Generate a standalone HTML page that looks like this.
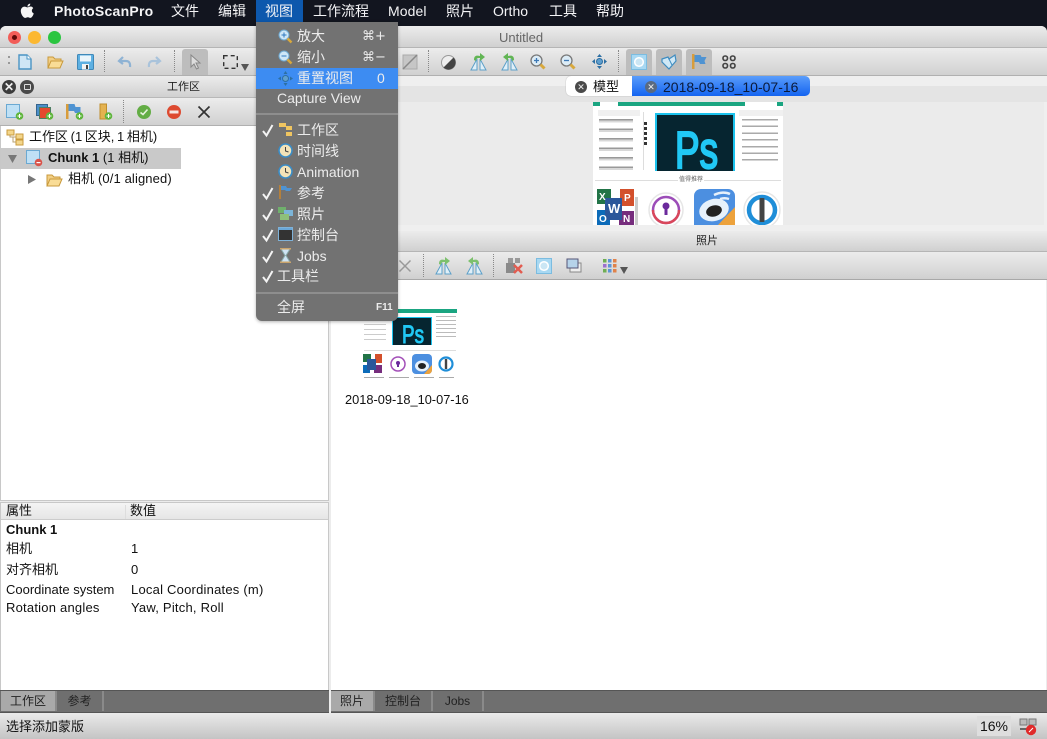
<!DOCTYPE html>
<html><head><meta charset="utf-8"><style>
*{box-sizing:border-box}
html,body{margin:0;padding:0;width:1047px;height:739px;overflow:hidden;background:#12151f}
body{font-family:"Liberation Sans","Noto Sans CJK SC",sans-serif;color:#111;position:relative;filter:blur(.35px)}
.a{position:absolute;white-space:nowrap}
.grad{background:linear-gradient(#ececec,#d0d0d0);}
.m{position:absolute;top:0;height:22px;line-height:23px;font-size:14px;color:#f4f4f6;white-space:nowrap}
.mi{position:absolute;left:22px;font-size:14px;color:#ececec;white-space:nowrap;line-height:20px}
.t{font-size:13px;line-height:18px;color:#111}
.tab{position:absolute;top:691px;height:20px;line-height:20px;font-size:12px;text-align:center;background:#6f6f6f;border-right:2px solid #8a8a8a;color:#222}
svg{position:absolute;overflow:visible}
</style></head><body>
<!-- menu bar -->
<svg style="left:20px;top:3px" width="15" height="16" viewBox="0 0 15 16"><path fill="#f5f5f5" d="M10.3 0.6c0 1.6-1.2 3-2.8 3C7.3 2.1 8.700.6 10.300.6zM13.200 5.300c-2 1.300-1.700 4.200.6 5.200-.6 1.700-1.800 4.300-3.300 4.400-1 0-1.400-.7-2.700-.7s-1.700.7-2.700.7C3.300 14.900.8 11 .8 8c0-3 2-4.400 3.700-4.400 1.200 0 2.200.8 3 .8.700 0 1.800-.9 3.200-.9 1 0 2 .5 2.500 1.800z"/></svg>
<div class="m" style="left:54px;font-weight:bold;letter-spacing:.25px">PhotoScanPro</div>
<div class="m" style="left:171px">文件</div>
<div class="m" style="left:218px">编辑</div>
<div class="a" style="left:256px;top:0;width:47px;height:22px;background:#0d58ad"></div>
<div class="m" style="left:265px">视图</div>
<div class="m" style="left:313px">工作流程</div>
<div class="m" style="left:388px;letter-spacing:.1px">Model</div>
<div class="m" style="left:446px">照片</div>
<div class="m" style="left:493px">Ortho</div>
<div class="m" style="left:549px">工具</div>
<div class="m" style="left:596px">帮助</div>

<!-- window -->
<div class="a" style="left:0;top:26px;width:1047px;height:713px;background:#ececec;border-radius:6px 6px 0 0;overflow:hidden">
 <div class="a grad" style="left:0;top:0;width:1047px;height:22px;border-bottom:1px solid #b5b5b5"></div>
 <div class="a grad" style="left:0;top:22px;width:1047px;height:28px;border-bottom:1px solid #b0b0b0"></div>
</div>
<div class="a" style="left:499px;top:30px;font-size:13px;line-height:16px;color:#666">Untitled</div>
<div class="a" style="left:8px;top:31px;width:13px;height:13px;border-radius:50%;background:#f25d58"></div>
<div class="a" style="left:12px;top:35px;width:5px;height:5px;border-radius:50%;background:#5e0b09"></div>
<div class="a" style="left:28px;top:31px;width:13px;height:13px;border-radius:50%;background:#fcb831"></div>
<div class="a" style="left:48px;top:31px;width:13px;height:13px;border-radius:50%;background:#2bc540"></div>

<!-- main toolbar icons -->
<div class="a" style="left:8px;top:56px;width:2px;height:2px;background:#999"></div>
<div class="a" style="left:8px;top:62px;width:2px;height:2px;background:#999"></div>
<svg style="left:18px;top:54px" width="14" height="16"><path d="M1 1h8l4 4v10H1z" fill="#cfe6f5" stroke="#4a94c4" stroke-width="1.400"/><path d="M9 1v4h4" fill="#fff" stroke="#4a94c4"/></svg>
<svg style="left:47px;top:55px" width="17" height="14"><path d="M1 13V2h5l2 2h6v2" fill="#f2cf85" stroke="#c99a3c"/><path d="M1 13l3-7h12l-3 7z" fill="#f9dc96" stroke="#c99a3c"/></svg>
<svg style="left:77px;top:54px" width="17" height="16"><rect x=".5" y=".5" width="16" height="15" rx="1" fill="#5db0e2" stroke="#3f88b8"/><rect x="3" y="1.500" width="11" height="6" fill="#eaf5fb"/><rect x="5" y="10" width="7" height="5.500" fill="#f4f4f4"/><rect x="9" y="11" width="2" height="4" fill="#444"/></svg>
<div class="a" style="left:104px;top:50px;height:22px;border-left:1px dotted #888"></div>
<svg style="left:118px;top:55px" width="14" height="14"><path d="M5 2L1 6l4 3M1.500 6H8c3 0 4.500 2 4 6" fill="none" stroke="#8fb3d4" stroke-width="2.200"/></svg>
<svg style="left:147px;top:55px" width="14" height="14"><path d="M9 2l4 4-4 3M12.500 6H6C3 6 1.500 8 2 12" fill="none" stroke="#a9c3db" stroke-width="2.200"/></svg>
<div class="a" style="left:174px;top:50px;height:22px;border-left:1px dotted #888"></div>
<div class="a" style="left:182px;top:49px;width:26px;height:26px;background:#bdbdbd;border-radius:3px 3px 0 0"></div>
<svg style="left:189px;top:54px" width="13" height="16"><path d="M2 1v12l3-3 2.500 5 2-1-2.500-5h4z" fill="#ddd" stroke="#888"/></svg>
<svg style="left:223px;top:55px" width="15" height="14"><rect x=".7" y=".7" width="13.600" height="12.600" fill="none" stroke="#333" stroke-width="1.400" stroke-dasharray="4 3"/></svg>
<svg style="left:241px;top:64px" width="9" height="7"><path d="M0 0h8L4 7z" fill="#555"/></svg>
<svg style="left:402px;top:54px" width="16" height="16"><rect x="1" y="1" width="14" height="14" fill="#c6c6c6" stroke="#aaa"/><path d="M1 15L15 1" stroke="#888" stroke-width="1.500"/></svg>
<div class="a" style="left:428px;top:50px;height:22px;border-left:1px dotted #888"></div>
<svg style="left:441px;top:55px" width="15" height="15"><circle cx="7.500" cy="7.500" r="7" fill="#eee" stroke="#999"/><path d="M12.500 2.500A7 7 0 0 1 2.500 12.500z" fill="#444"/></svg>
<svg style="left:470px;top:53px" width="18" height="18"><path d="M1 17L7 6v11zM10 6l6 11h-6z" fill="#e0eff8" stroke="#5da0c9"/><path d="M4 7c0-4 2-5 6-4V0l5 4-5 4V5C8 5 6 5 6 8z" fill="#62b554"/></svg>
<svg style="left:500px;top:53px" width="18" height="18"><path d="M17 17L11 6v11zM8 6L2 17h6z" fill="#e0eff8" stroke="#5da0c9"/><path d="M14 7c0-4-2-5-6-4V0L3 4l5 4V5c2 0 4 0 4 3z" fill="#62b554"/></svg>
<svg style="left:530px;top:54px" width="16" height="16"><circle cx="6.500" cy="6.500" r="5.500" fill="#dcecf6" stroke="#7a7a7a" stroke-width="1.300"/><path d="M10.500 10.500l4 4" stroke="#d8a83c" stroke-width="3"/><path d="M4 6.500h5M6.500 4v5" stroke="#3c78b5" stroke-width="1.300"/></svg>
<svg style="left:560px;top:54px" width="16" height="16"><circle cx="6.500" cy="6.500" r="5.500" fill="#dcecf6" stroke="#7a7a7a" stroke-width="1.300"/><path d="M10.500 10.500l4 4" stroke="#d8a83c" stroke-width="3"/><path d="M4 6.500h5" stroke="#3c78b5" stroke-width="1.300"/></svg>
<svg style="left:592px;top:54px" width="15" height="15"><circle cx="7.500" cy="7.500" r="3" fill="#5f9fce" stroke="#2d6fa3"/><path d="M7.500 0l-2.500 3h5zM7.500 15l-2.500-3h5zM0 7.500L3 5v5zM15 7.500L12 5v5z" fill="#2d6fa3"/></svg>
<div class="a" style="left:618px;top:50px;height:22px;border-left:1px dotted #888"></div>
<div class="a" style="left:626px;top:49px;width:26px;height:26px;background:#bdbdbd;border-radius:3px 3px 0 0"></div>
<div class="a" style="left:656px;top:49px;width:26px;height:26px;background:#bdbdbd;border-radius:3px 3px 0 0"></div>
<div class="a" style="left:686px;top:49px;width:26px;height:26px;background:#bdbdbd;border-radius:3px 3px 0 0"></div>
<svg style="left:631px;top:54px" width="16" height="16"><rect x=".5" y=".5" width="15" height="15" fill="#a8d8f2" stroke="#7bbce0"/><circle cx="8" cy="8" r="4.300" fill="#cbe6f4" stroke="#fff" stroke-width="1.500"/></svg>
<svg style="left:661px;top:54px" width="16" height="16"><path d="M1 5l6-2 1 2 6-4 1 6-7 8-7-7z" fill="#cfe8f6" stroke="#3f8cc0" stroke-width="1.200"/><path d="M8 5l3 6" stroke="#3f8cc0"/></svg>
<svg style="left:691px;top:53px" width="17" height="17"><rect x="1" y="1" width="2.500" height="15" fill="#d89d3c"/><path d="M3.500 2h6l1 2h5l-2 4 1 3H9l-1-2H3.500z" fill="#4f93d2"/></svg>
<svg style="left:722px;top:55px" width="14" height="14"><g fill="none" stroke="#444" stroke-width="1.600"><rect x="1" y="1" width="4.500" height="4.500" rx="2"/><rect x="8.500" y="1" width="4.500" height="4.500" rx="2"/><rect x="1" y="8.500" width="4.500" height="4.500" rx="2"/><rect x="8.500" y="8.500" width="4.500" height="4.500" rx="2"/></g></svg>

<!-- left dock -->
<div class="a grad" style="left:0;top:76px;width:329px;height:22px;border-bottom:1px solid #b8b8b8"></div>
<div class="a" style="left:167px;top:80px;font-size:11px;line-height:15px;color:#222">工作区</div>
<div class="a" style="left:2px;top:80px;width:14px;height:14px;border-radius:50%;background:#3c3c3c;color:#eee;font-size:12px;line-height:14px;text-align:center;font-weight:bold">✕</div>
<div class="a" style="left:20px;top:80px;width:14px;height:14px;border-radius:50%;background:#4a4a4a"></div>
<div class="a" style="left:24px;top:84px;width:7px;height:6px;border:1px solid #ddd;border-radius:1px"></div>
<div class="a grad" style="left:0;top:98px;width:329px;height:28px;border-bottom:1px solid #b0b0b0"></div>
<svg style="left:6px;top:104px" width="18" height="16"><rect x=".5" y=".5" width="13" height="13" fill="#bfe0f5" stroke="#6ba9d2"/><circle cx="13.500" cy="12" r="3.800" fill="#5fb53c"/><path d="M11.500 12h4M13.500 10v4" stroke="#fff"/></svg>
<svg style="left:36px;top:104px" width="18" height="16"><rect x=".5" y=".5" width="11" height="11" fill="#4a8fca" stroke="#36648c"/><rect x="3.500" y="3.500" width="11" height="11" fill="#e4492f" stroke="#4d7d63"/><circle cx="13.500" cy="12" r="3.800" fill="#5fb53c"/><path d="M11.500 12h4M13.500 10v4" stroke="#fff"/></svg>
<svg style="left:66px;top:103px" width="18" height="17"><rect x="0" y="1" width="2.500" height="15" fill="#d89d3c"/><path d="M2.500 1h6l1 3h5v6H9L8 8H2.500z" fill="#4f93d2"/><circle cx="13.500" cy="13" r="3.800" fill="#5fb53c"/><path d="M11.500 13h4M13.500 11v4" stroke="#fff"/></svg>
<svg style="left:100px;top:103px" width="13" height="17"><rect x="0" y="1" width="6.500" height="15" fill="#e4b250" stroke="#c08e2c"/><circle cx="8.500" cy="13" r="3.800" fill="#5fb53c"/><path d="M6.500 13h4M8.500 11v4" stroke="#fff"/></svg>
<div class="a" style="left:123px;top:100px;height:23px;border-left:1px dotted #888"></div>
<svg style="left:137px;top:105px" width="14" height="14"><circle cx="7" cy="7" r="7" fill="#63ad45"/><path d="M3.500 7.500l2.500 2 4.500-5" fill="none" stroke="#e6f3dd" stroke-width="1.600"/></svg>
<svg style="left:167px;top:105px" width="14" height="14"><circle cx="7" cy="7" r="7" fill="#dd4a30"/><rect x="2.500" y="5.500" width="9" height="3" fill="#f6e7e3"/></svg>
<svg style="left:197px;top:105px" width="14" height="14"><path d="M1.500 1.500l11 11M12.500 1.500l-11 11" stroke="#333" stroke-width="1.700"/></svg>

<!-- tree -->
<div class="a" style="left:0;top:126px;width:329px;height:375px;background:#fff;border:1px solid #c8c8c8;border-width:0 1px 1px 1px"></div>
<div class="a" style="left:1px;top:148px;width:180px;height:21px;background:#c9c9c9"></div>
<svg style="left:6px;top:129px" width="18" height="17"><path d="M4 5v3h7M7 8v5h4" fill="none" stroke="#b9a070"/><g fill="#f3d68c" stroke="#c99a3c"><rect x="1" y="1" width="7" height="5"/><rect x="10" y="5" width="7" height="5"/><rect x="10" y="11" width="7" height="5"/></g></svg>
<div class="a t" style="left:29px;top:128px;word-spacing:-1px">工作区 (1 区块, 1 相机)</div>
<svg style="left:8px;top:155px" width="9" height="8"><path d="M0 0h9L4.500 8z" fill="#777"/></svg>
<svg style="left:26px;top:150px" width="18" height="17"><rect x=".5" y=".5" width="13" height="13" fill="#bfe0f5" stroke="#6ba9d2"/><circle cx="12.500" cy="12.500" r="3.800" fill="#d9534a"/><rect x="10.500" y="12" width="4" height="1.200" fill="#fff"/></svg>
<div class="a t" style="left:48px;top:149px;font-weight:bold">Chunk 1 <span style="font-weight:normal">(1 相机)</span></div>
<svg style="left:28px;top:175px" width="8" height="9"><path d="M0 0l8 4.500L0 9z" fill="#777"/></svg>
<svg style="left:46px;top:173px" width="17" height="14"><path d="M1 13V2h5l2 2h6v2" fill="#f2cf85" stroke="#c99a3c"/><path d="M1 13l3-7h12l-3 7z" fill="#f9dc96" stroke="#c99a3c"/></svg>
<div class="a t" style="left:68px;top:170px;letter-spacing:.12px">相机 (0/1 aligned)</div>

<!-- properties -->
<div class="a" style="left:0;top:502px;width:329px;height:188px;background:#fff;border:1px solid #c8c8c8;border-width:1px 1px 0 1px"></div>
<div class="a" style="left:1px;top:503px;width:327px;height:17px;background:linear-gradient(#f4f4f4,#e6e6e6);border-bottom:1px solid #ccc"></div>
<div class="a" style="left:125px;top:505px;height:14px;border-left:1px solid #ddd"></div>
<div class="a t" style="left:6px;top:502px">属性</div>
<div class="a t" style="left:130px;top:502px">数值</div>
<div class="a t" style="left:6px;top:521px;font-weight:bold">Chunk 1</div>
<div class="a t" style="left:6px;top:540px">相机</div><div class="a t" style="left:131px;top:540px">1</div>
<div class="a t" style="left:6px;top:561px">对齐相机</div><div class="a t" style="left:131px;top:561px">0</div>
<div class="a t" style="left:6px;top:581px">Coordinate system</div><div class="a t" style="left:131px;top:581px;letter-spacing:.22px">Local Coordinates (m)</div>
<div class="a t" style="left:6px;top:599px;letter-spacing:.22px">Rotation angles</div><div class="a t" style="left:131px;top:599px;letter-spacing:.22px">Yaw, Pitch, Roll</div>

<!-- center area -->
<div class="a" style="left:330px;top:76px;width:717px;height:155px;background:#efefef"></div>
<div class="a" style="left:330px;top:86px;width:717px;height:16px;background:#e4e4e4"></div>
<div class="a" style="left:330px;top:102px;width:714px;height:123px;background:#ebebeb"></div>
<!-- big image -->
<div class="a" style="left:593px;top:102px;width:190px;height:123px;background:#fff;overflow:hidden">
 <div class="a" style="left:0;top:0;width:190px;height:4px;background:#1aa581"></div>
 <div class="a" style="left:7px;top:0;width:18px;height:4px;background:#fff"></div>
 <div class="a" style="left:152px;top:0;width:32px;height:4px;background:#fff"></div>
 <div class="a" style="left:5px;top:8px;width:42px;height:6px;background:#f0f0f0"></div>
 <div class="a" style="left:146px;top:8px;width:44px;height:6px;background:#f0f0f0"></div>
 <div class="a" style="left:6px;top:17px;width:34px;height:52px;background:repeating-linear-gradient(#999 0 1.500px,#d8d8d8 1.500px 3.500px,#fff 3.500px 9.500px)"></div>
 <div class="a" style="left:149px;top:17px;width:36px;height:46px;background:repeating-linear-gradient(#aaa 0 1.500px,#fff 1.500px 6.700px)"></div>
 <div class="a" style="left:50px;top:10px;width:1px;height:58px;background:#ddd"></div>
 <div class="a" style="left:51px;top:20px;width:3px;height:25px;background:repeating-linear-gradient(#333 0 3px,#fff 3px 5px)"></div>
 <div class="a" style="left:62px;top:11px;width:80px;height:58px;background:#062530;border:2px solid #1bc3ee;border-bottom:none"></div>
 <svg style="left:62px;top:11px" width="80" height="58"><text x="20" y="55" font-size="52" font-family="Liberation Sans" fill="#21c8f5" stroke="#21c8f5" stroke-width="2.200" textLength="43" lengthAdjust="spacingAndGlyphs">Ps</text></svg>
 <div class="a" style="left:2px;top:78px;width:186px;height:1px;background:#ddd"></div>
 <div class="a" style="left:85px;top:75px;width:26px;height:6px;background:#fff;text-align:center;font-size:6px;line-height:6px;color:#666">值得推荐</div>
 <svg style="left:4px;top:87px" width="42" height="36" font-family="Liberation Sans" font-size="10" font-weight="bold" fill="#fff"><rect x="0" y="0" width="14" height="15" fill="#227447"/><rect x="0" y="21" width="13" height="15" fill="#0c6bb9"/><rect x="23" y="0" width="14" height="17" fill="#d3502c"/><rect x="22" y="22" width="15" height="14" fill="#762d7d"/><rect x="8" y="9" width="17" height="22" fill="#2b579a"/><rect x="38" y="8" width="3" height="28" fill="#ccc"/><text x="2" y="11">X</text><text x="11" y="24" font-size="13">W</text><text x="27" y="12">P</text><text x="2" y="33">O</text><text x="26" y="33">N</text></svg>
 <svg style="left:54px;top:89px" width="36" height="36"><circle cx="19" cy="19" r="17" fill="#fff" stroke="#e6e6e6" stroke-width="1.500"/><circle cx="19" cy="19" r="13" fill="none" stroke="#9c4db8" stroke-width="2.500"/><path d="M6 19A13 13 0 0 0 32 19" fill="none" stroke="#d9475a" stroke-width="2.500"/><circle cx="19" cy="15" r="3.500" fill="#6b2a9c"/><rect x="17.500" y="16" width="3" height="8" fill="#6b2a9c"/></svg>
 <svg style="left:101px;top:87px" width="41" height="36"><rect x="0" y="0" width="41" height="44" rx="7" fill="#4c8fe0"/><ellipse cx="20" cy="21" rx="15" ry="11" fill="#e7f1fb" transform="rotate(-15 20 21)"/><ellipse cx="20" cy="22" rx="8" ry="5.500" fill="#222" transform="rotate(-15 20 22)"/><path d="M20 6c6-3 12-3 16-1M26 10c3-1 6-1 9 0" fill="none" stroke="#e7f1fb" stroke-width="2.500"/><path d="M24 36L41 18v18z" fill="#eda23c"/></svg>
 <svg style="left:150px;top:89px" width="38" height="36"><circle cx="19" cy="19" r="18" fill="#fff" stroke="#e6e6e6" stroke-width="1.500"/><circle cx="19" cy="19" r="13" fill="none" stroke="#1f8ed8" stroke-width="4.500"/><rect x="16.500" y="7" width="5" height="24" rx="1" fill="#444"/></svg>
</div>

<!-- view tabs -->
<div class="a" style="left:566px;top:76px;width:67px;height:20px;background:#fff;border-radius:5px 0 0 5px;box-shadow:0 0 1px #999"></div>
<div class="a" style="left:632px;top:76px;width:178px;height:20px;background:linear-gradient(#5a9dfb,#1464f0);border-radius:0 5px 5px 0"></div>
<div class="a" style="left:575px;top:81px;width:12px;height:12px;border-radius:50%;background:#4a4a4a;color:#eee;font-size:9px;line-height:12px;text-align:center">✕</div>
<div class="a t" style="left:593px;top:78px">模型</div>
<div class="a" style="left:645px;top:81px;width:12px;height:12px;border-radius:50%;background:#5a6a80;color:#eee;font-size:9px;line-height:12px;text-align:center">✕</div>
<div class="a t" style="left:663px;top:78px;color:#0a1a3a;font-size:14px">2018-09-18_10-07-16</div>

<!-- photos panel -->
<div class="a grad" style="left:330px;top:231px;width:717px;height:21px;border-bottom:1px solid #b5b5b5"></div>
<div class="a" style="left:696px;top:234px;font-size:11px;line-height:15px;color:#222">照片</div>
<div class="a grad" style="left:330px;top:252px;width:717px;height:28px;border-bottom:1px solid #a8a8a8"></div>
<div class="a" style="left:331px;top:280px;width:715px;height:410px;background:#fff"></div>
<svg style="left:398px;top:259px" width="14" height="14"><path d="M1.500 1.500l11 11M12.500 1.500l-11 11" stroke="#999" stroke-width="1.500"/></svg>
<div class="a" style="left:423px;top:254px;height:23px;border-left:1px dotted #888"></div>
<svg style="left:435px;top:257px" width="18" height="18"><path d="M1 17L7 6v11zM10 6l6 11h-6z" fill="#e0eff8" stroke="#5da0c9"/><path d="M4 7c0-4 2-5 6-4V0l5 4-5 4V5C8 5 6 5 6 8z" fill="#7cc06c"/></svg>
<svg style="left:465px;top:257px" width="18" height="18"><path d="M17 17L11 6v11zM8 6L2 17h6z" fill="#e0eff8" stroke="#5da0c9"/><path d="M14 7c0-4-2-5-6-4V0L3 4l5 4V5c2 0 4 0 4 3z" fill="#7cc06c"/></svg>
<div class="a" style="left:493px;top:254px;height:23px;border-left:1px dotted #888"></div>
<svg style="left:506px;top:258px" width="17" height="16"><rect x="0" y="5" width="9" height="10" fill="#8a8a8a"/><rect x="2" y="0" width="5" height="5" fill="#999"/><rect x="9" y="0" width="5" height="5" fill="#999"/><path d="M8 7l8 8M16 7l-8 8" stroke="#e25c50" stroke-width="2.500"/></svg>
<svg style="left:536px;top:258px" width="16" height="16"><rect x=".5" y=".5" width="15" height="15" fill="#a8d8f2" stroke="#7bbce0"/><circle cx="8" cy="8" r="4.300" fill="#cbe6f4" stroke="#fff" stroke-width="1.500"/></svg>
<svg style="left:566px;top:258px" width="16" height="16"><rect x="4" y="5" width="11" height="9" fill="#eee" stroke="#888"/><rect x="1" y="1" width="11" height="9" fill="#b6d3ea" stroke="#557"/></svg>
<svg style="left:603px;top:259px" width="14" height="15"><g><rect x="0" y="0" width="3.500" height="3.500" fill="#6fae54"/><rect x="5" y="0" width="3.500" height="3.500" fill="#5d95d6"/><rect x="10" y="0" width="3.500" height="3.500" fill="#e0824a"/><rect x="0" y="5" width="3.500" height="3.500" fill="#9d6fcf"/><rect x="5" y="5" width="3.500" height="3.500" fill="#5d95d6"/><rect x="10" y="5" width="3.500" height="3.500" fill="#e0824a"/><rect x="0" y="10" width="3.500" height="3.500" fill="#6fae54"/><rect x="5" y="10" width="3.500" height="3.500" fill="#5d95d6"/><rect x="10" y="10" width="3.500" height="3.500" fill="#e0824a"/></g></svg>
<svg style="left:620px;top:267px" width="8" height="7"><path d="M0 0h8L4 7z" fill="#555"/></svg>

<!-- thumbnail -->
<div class="a" style="left:362px;top:306px;width:96px;height:74px;background:#fff;overflow:hidden">
 <div class="a" style="left:30px;top:3px;width:65px;height:4px;background:#1aa581"></div>
 <div class="a" style="left:30px;top:11px;width:40px;height:28px;background:#062530;border:1px solid #1bc3ee;border-bottom:none"></div>
 <svg style="left:30px;top:11px" width="40" height="28"><text x="10" y="26" font-size="25" font-family="Liberation Sans" fill="#21c8f5" stroke="#21c8f5" stroke-width="1" textLength="22" lengthAdjust="spacingAndGlyphs">Ps</text></svg>
 <div class="a" style="left:2px;top:18px;width:22px;height:20px;background:repeating-linear-gradient(#ccc 0 1px,#fff 1px 5px)"></div>
 <div class="a" style="left:74px;top:10px;width:20px;height:24px;background:repeating-linear-gradient(#bbb 0 1px,#fff 1px 4px)"></div>
 <div class="a" style="left:2px;top:44px;width:92px;height:1px;background:#ddd"></div>
 <svg style="left:1px;top:48px" width="21" height="20"><rect x="0" y="0" width="8" height="8" fill="#227447"/><rect x="0" y="11" width="7" height="8" fill="#0c6bb9"/><rect x="12" y="0" width="7" height="9" fill="#d3502c"/><rect x="11" y="11" width="8" height="8" fill="#762d7d"/><rect x="4" y="5" width="9" height="11" fill="#2b579a"/></svg>
 <svg style="left:27px;top:49px" width="18" height="18"><circle cx="9" cy="9" r="7" fill="none" stroke="#a34fb8" stroke-width="1.500"/><circle cx="9" cy="8" r="2" fill="#6b2a9c"/><rect x="8" y="8" width="2" height="4" fill="#6b2a9c"/></svg>
 <svg style="left:50px;top:48px" width="20" height="20"><rect width="20" height="20" rx="4" fill="#4c8fe0"/><ellipse cx="10" cy="12" rx="7" ry="5.500" fill="#e7f1fb"/><ellipse cx="10" cy="12" rx="4" ry="3" fill="#222"/><path d="M12 20L20 11v5a4 4 0 0 1-4 4z" fill="#eda23c"/></svg>
 <svg style="left:75px;top:49px" width="18" height="18"><circle cx="9" cy="9" r="6.500" fill="none" stroke="#1f8ed8" stroke-width="2.200"/><rect x="7.800" y="4" width="2.400" height="10" fill="#444"/></svg>
 <div class="a" style="left:2px;top:71px;width:90px;height:1px;background:repeating-linear-gradient(90deg,#aaa 0 20px,#fff 20px 25px)"></div>
</div>
<div class="a t" style="left:345px;top:391px;font-size:12.800px">2018-09-18_10-07-16</div>

<!-- bottom tabs -->
<div class="a" style="left:0;top:690px;width:329px;height:23px;background:#6f6f6f;border:1px solid #555;border-width:1px 0"></div>
<div class="a" style="left:331px;top:690px;width:716px;height:23px;background:#6f6f6f;border:1px solid #555;border-width:1px 0"></div>
<div class="tab" style="left:1px;width:56px;background:#a9a9a9">工作区</div>
<div class="tab" style="left:57px;width:47px">参考</div>
<div class="tab" style="left:331px;width:44px;background:#a9a9a9">照片</div>
<div class="tab" style="left:375px;width:58px">控制台</div>
<div class="tab" style="left:433px;width:51px">Jobs</div>

<!-- status -->
<div class="a" style="left:0;top:713px;width:1047px;height:26px;background:linear-gradient(#eaeaea,#c4c4c4)"></div>
<div class="a t" style="left:6px;top:718px">选择添加蒙版</div>
<div class="a" style="left:977px;top:716px;width:34px;height:20px;background:#dedede;text-align:center;font-size:14px;line-height:21px">16%</div>
<svg style="left:1019px;top:718px" width="18" height="18"><rect x="1" y="1" width="7" height="6" fill="#bbb" stroke="#777"/><rect x="10" y="1" width="7" height="6" fill="#bbb" stroke="#777"/><rect x="1" y="10" width="7" height="2" fill="#666"/><circle cx="12" cy="12" r="5.200" fill="#e02a2a"/><path d="M10 14l4-4" stroke="#fff"/></svg>

<!-- dropdown -->
<div class="a" style="left:256px;top:22px;width:142px;height:299px;background:#727272;border-radius:0 0 6px 6px;box-shadow:0 1px 3px rgba(0,0,0,.3)"></div>
<div class="a" style="left:256px;top:68px;width:142px;height:21px;background:#3d8cf2"></div>
<div class="a" style="left:256px;top:113px;width:142px;height:2px;background:#8e8e8e"></div>
<div class="a" style="left:256px;top:292px;width:142px;height:2px;background:#8e8e8e"></div>
<div class="a" style="left:256px;top:22px;width:142px;height:299px">
 <svg style="left:22px;top:7px" width="15" height="15"><circle cx="6" cy="6" r="5" fill="#cfe7f7" stroke="#6ea8d0"/><path d="M9.500 9.500l4 4" stroke="#d8a83c" stroke-width="2.500"/><path d="M3.500 6h5M6 3.500v5" stroke="#2e78c0"/></svg>
 <div class="mi" style="left:41px;top:4px">放大</div><div class="mi" style="left:106px;top:5px;font-family:'DejaVu Sans','Liberation Sans',sans-serif;font-size:13px">⌘+</div>
 <svg style="left:22px;top:28px" width="15" height="15"><circle cx="6" cy="6" r="5" fill="#cfe7f7" stroke="#6ea8d0"/><path d="M9.500 9.500l4 4" stroke="#d8a83c" stroke-width="2.500"/><path d="M3.500 6h5" stroke="#2e78c0"/></svg>
 <div class="mi" style="left:41px;top:25px">缩小</div><div class="mi" style="left:106px;top:26px;font-family:'DejaVu Sans','Liberation Sans',sans-serif;font-size:13px">⌘−</div>
 <svg style="left:22px;top:49px" width="15" height="15"><circle cx="7.500" cy="7.500" r="3" fill="#5f9fce" stroke="#2d6fa3"/><path d="M7.500 0l-2 3h4zM7.500 15l-2-3h4zM0 7.500L3 5.500v4zM15 7.500L12 5.500v4z" fill="#2d6fa3"/></svg>
 <div class="mi" style="left:41px;top:46px">重置视图</div><div class="mi" style="left:121px;top:46px">0</div>
 <div class="mi" style="left:21px;top:66px">Capture View</div>
 <svg style="left:6px;top:102px" width="12" height="13"><path d="M1 7l3.500 4.500L10.500 1" fill="none" stroke="#f4f4f4" stroke-width="2"/></svg>
 <svg style="left:22px;top:100px" width="15" height="15"><g fill="#f0c560"><rect x="1" y="1" width="7" height="4"/><rect x="8" y="4" width="6" height="4"/><rect x="8" y="10" width="6" height="4"/></g></svg>
 <div class="mi" style="left:41px;top:98px">工作区</div>
 <svg style="left:22px;top:121px" width="15" height="15"><circle cx="7.500" cy="7.500" r="6.500" fill="#f3e3b8" stroke="#3a8dc8" stroke-width="1.600"/><path d="M7.500 4v4l3 1" fill="none" stroke="#444"/></svg>
 <div class="mi" style="left:41px;top:119px">时间线</div>
 <svg style="left:22px;top:142px" width="15" height="15"><circle cx="7.500" cy="7.500" r="6.500" fill="#f3e3b8" stroke="#3a8dc8" stroke-width="1.600"/><path d="M7.500 4v4l3 1" fill="none" stroke="#444"/></svg>
 <div class="mi" style="left:41px;top:140px">Animation</div>
 <svg style="left:6px;top:165px" width="12" height="13"><path d="M1 7l3.500 4.500L10.500 1" fill="none" stroke="#f4f4f4" stroke-width="2"/></svg>
 <svg style="left:22px;top:162px" width="15" height="16"><rect x="1" y="1" width="2" height="14" fill="#b4803c"/><path d="M3 2h5l1 2h5l-2 3H8L7 6H3z" fill="#4f93d2"/></svg>
 <div class="mi" style="left:41px;top:161px">参考</div>
 <svg style="left:6px;top:186px" width="12" height="13"><path d="M1 7l3.500 4.500L10.500 1" fill="none" stroke="#f4f4f4" stroke-width="2"/></svg>
 <svg style="left:22px;top:184px" width="15" height="15"><rect x="0" y="1" width="8" height="6" fill="#6fb06c"/><rect x="6" y="4" width="9" height="6" fill="#7cb5d9"/><rect x="2" y="8" width="9" height="6" fill="#8ec07a"/></svg>
 <div class="mi" style="left:41px;top:182px">照片</div>
 <svg style="left:6px;top:207px" width="12" height="13"><path d="M1 7l3.500 4.500L10.500 1" fill="none" stroke="#f4f4f4" stroke-width="2"/></svg>
 <svg style="left:22px;top:205px" width="15" height="14"><rect x=".5" y=".5" width="14" height="13" fill="#333" stroke="#7fb2d8"/><rect x="1" y="1" width="13" height="2" fill="#69a7d8"/></svg>
 <div class="mi" style="left:41px;top:203px">控制台</div>
 <svg style="left:6px;top:228px" width="12" height="13"><path d="M1 7l3.500 4.500L10.500 1" fill="none" stroke="#f4f4f4" stroke-width="2"/></svg>
 <svg style="left:24px;top:226px" width="11" height="15"><path d="M1 1h9L6 7.500l4 6.500H1l4-6.500z" fill="#cfe4f4" stroke="#8aa"/><rect x="0" y="0" width="11" height="1.500" fill="#c9a36a"/><rect x="0" y="13.500" width="11" height="1.500" fill="#c9a36a"/></svg>
 <div class="mi" style="left:41px;top:224px">Jobs</div>
 <svg style="left:6px;top:248px" width="12" height="13"><path d="M1 7l3.500 4.500L10.500 1" fill="none" stroke="#f4f4f4" stroke-width="2"/></svg>
 <div class="mi" style="left:21px;top:244px">工具栏</div>
 <div class="mi" style="left:21px;top:275px">全屏</div>
 <div class="mi" style="left:120px;top:276px;font-size:10px;font-weight:bold">F11</div>
</div>
</body></html>
